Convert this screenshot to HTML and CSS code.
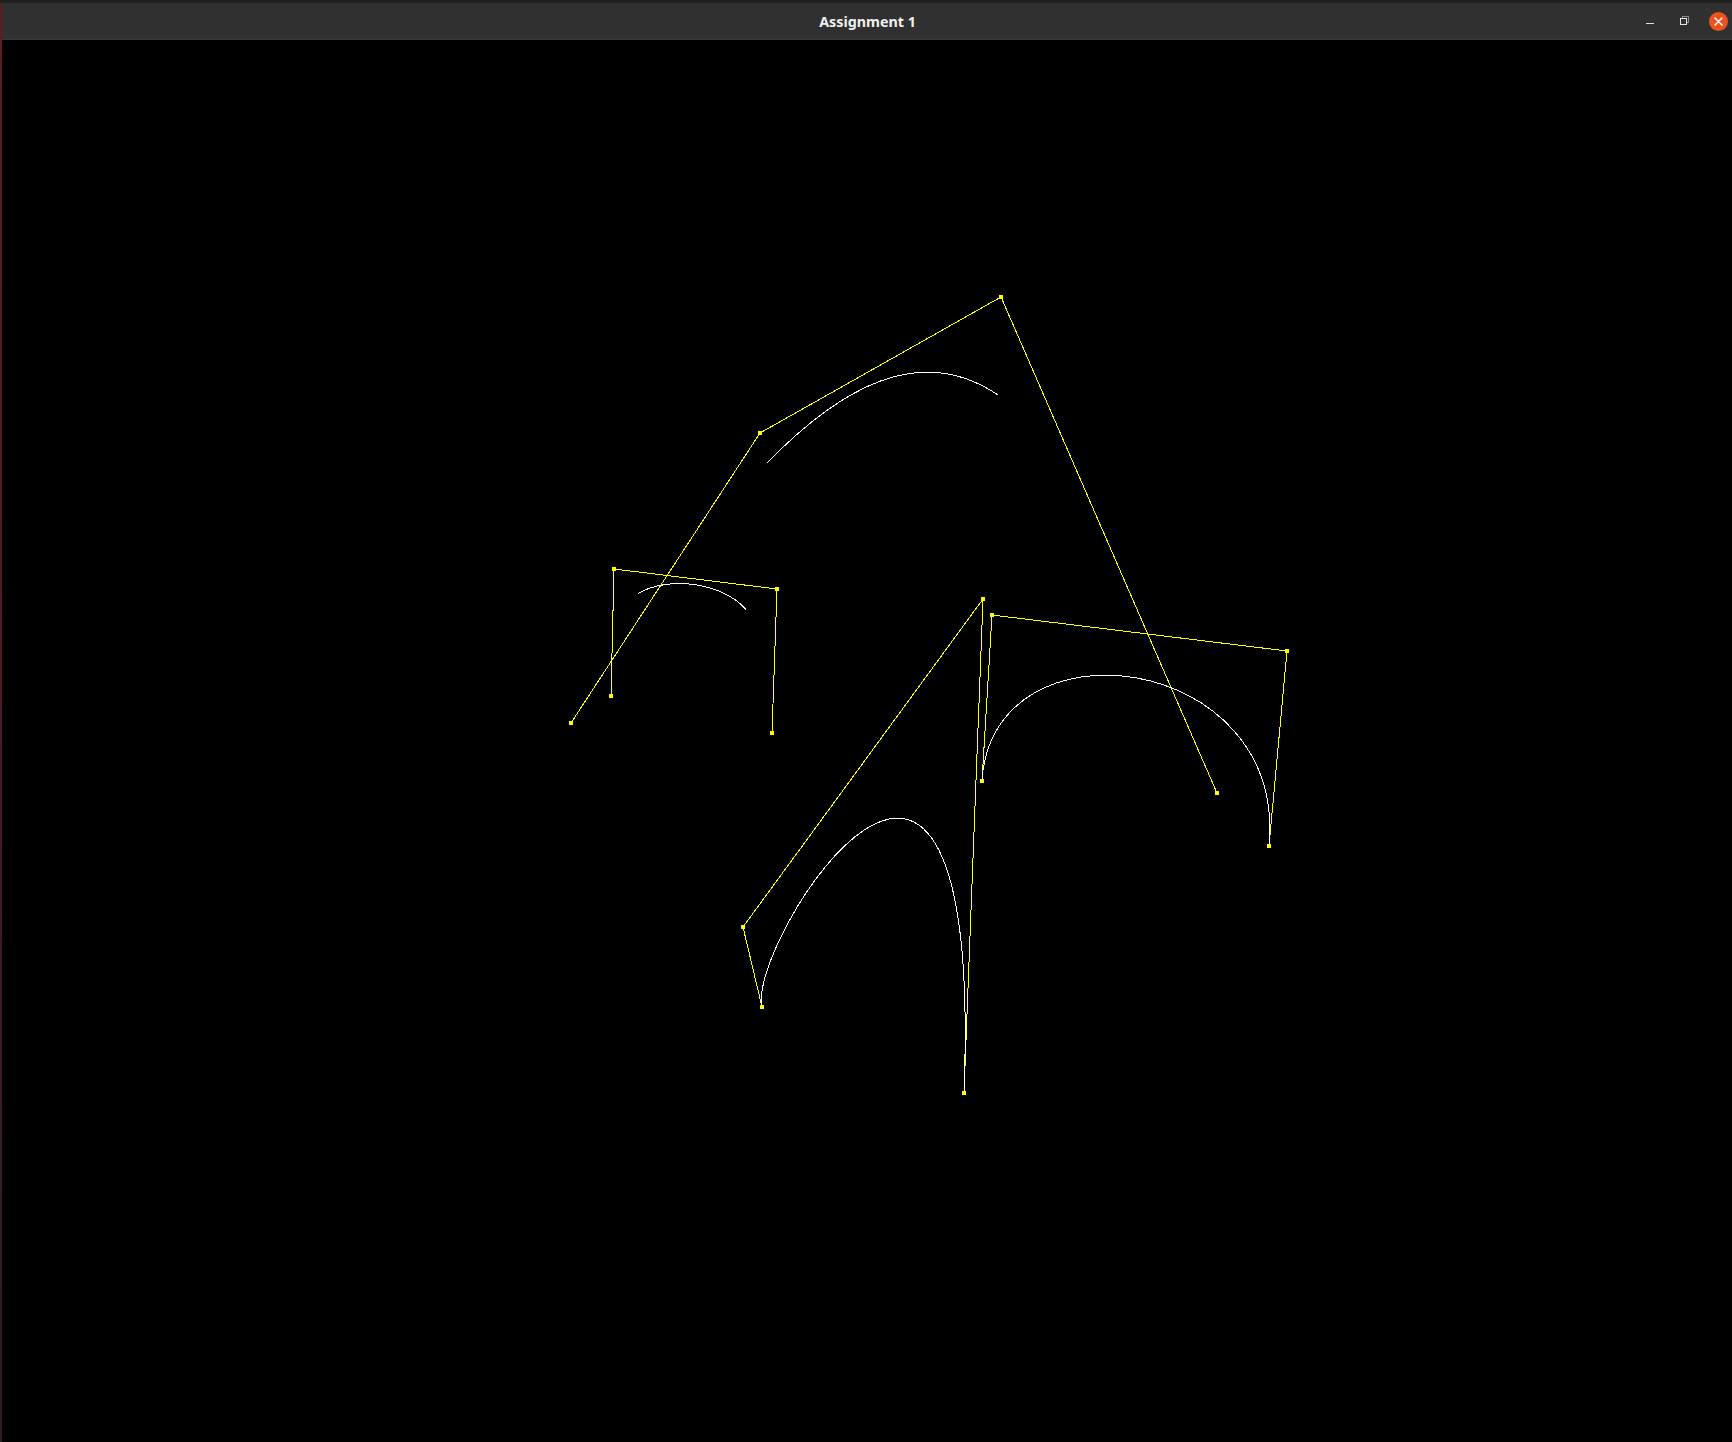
FILE: index.html
```html
<!DOCTYPE html>
<html lang="en">
<head>
<meta charset="utf-8">
<title>Assignment 1</title>
<link rel="stylesheet" href="styles.css">
</head>
<body>
<div class="screen">
  <div class="top-edge"></div>
  <div class="frame">
    <div class="side-edge"></div>
    <div class="window">
      <header class="titlebar">
        <div class="tb-left"></div>
        <div class="tb-title">Assignment 1</div>
        <div class="tb-controls">
          <button class="tb-btn" aria-label="Minimize">
            <svg width="24" height="24" viewBox="0 0 24 24"><rect x="8" y="14" width="8" height="1" fill="#dcdcdc"/></svg>
          </button>
          <button class="tb-btn" aria-label="Restore">
            <svg width="24" height="24" viewBox="0 0 24 24" shape-rendering="crispEdges">
              <path d="M10.5 9.5 V7.5 H16.5 V13.5 H14.5" fill="none" stroke="#8a8a8a" stroke-width="1"/>
              <rect x="8.5" y="9.5" width="6" height="6" fill="none" stroke="#e8e8e8" stroke-width="1"/>
            </svg>
          </button>
          <button class="tb-btn close" aria-label="Close">
            <svg width="19" height="19" viewBox="0 0 19 19">
              <path d="M6 6 L13 13 M13 6 L6 13" stroke="#ffffff" stroke-width="1.4" stroke-linecap="round"/>
            </svg>
          </button>
        </div>
      </header>
      <main class="canvas">
        <svg class="scene" width="1730" height="1402" viewBox="2 40 1730 1402" shape-rendering="crispEdges">
          <g class="polys" fill="none" stroke="#ffff00" stroke-width="1">
            <polyline points="571,723 760,433 1001,297 1217,793"/>
            <polyline points="611,696 614,569 777,589 772,733"/>
            <polyline points="762,1007 743,927 983,599 964,1093"/>
            <polyline points="982,781 992,615 1287,651 1269,846"/>
          </g>
          <g class="curves" fill="none" stroke="#ffffff" stroke-width="1">
            <path d="M767 463 C840 388 920 342 998 395"/>
            <path d="M638 593.5 C668 575.7 722.7 582.3 746 609.6"/>
            <path d="M762 1006.7 C746.6 942.7 984 570 964 1092.7"/>
            <path d="M982 780.7 C992 614.7 1287 650.7 1269 845.7"/>
          </g>
          <g class="pts" fill="#ffff00">
            <rect x="569" y="721" width="4" height="4"/>
            <rect x="758" y="431" width="4" height="4"/>
            <rect x="999" y="295" width="4" height="4"/>
            <rect x="1215" y="791" width="4" height="4"/>
            <rect x="609" y="694" width="4" height="4"/>
            <rect x="612" y="567" width="4" height="4"/>
            <rect x="775" y="587" width="4" height="4"/>
            <rect x="770" y="731" width="4" height="4"/>
            <rect x="760" y="1005" width="4" height="4"/>
            <rect x="741" y="925" width="4" height="4"/>
            <rect x="981" y="597" width="4" height="4"/>
            <rect x="962" y="1091" width="4" height="4"/>
            <rect x="980" y="779" width="4" height="4"/>
            <rect x="990" y="613" width="4" height="4"/>
            <rect x="1285" y="649" width="4" height="4"/>
            <rect x="1267" y="844" width="4" height="4"/>
          </g>
        </svg>
      </main>
    </div>
  </div>
</div>
</body>
</html>
```
FILE: styles.css
```css
* {
  box-sizing: border-box;
}

html,
body {
  margin: 0;
  padding: 0;
  background: #000000;
  overflow: hidden;
}

.screen {
  width: 1732px;
  height: 1442px;
  display: flex;
  flex-direction: column;
}

.top-edge {
  height: 3px;
  background: #1f1f1f;
  flex: none;
}

.frame {
  flex: 1;
  display: flex;
  min-height: 0;
}

.side-edge {
  width: 2px;
  flex: none;
  background: linear-gradient(to bottom, #5c1d1d 0%, #4a1c22 45%, #2b1c2a 100%);
}

.window {
  flex: 1;
  display: flex;
  flex-direction: column;
  min-width: 0;
}

.titlebar {
  height: 37px;
  flex: none;
  background: #303030;
  border-bottom: 1px solid #3a3a3a;
  display: grid;
  grid-template-columns: 1fr auto 1fr;
  align-items: center;
}

.tb-title {
  font-family: "Noto Sans", "DejaVu Sans", sans-serif;
  font-weight: 700;
  font-size: 14.3px;
  color: #efefed;
  padding-top: 1px;
  padding-left: 1px;
  white-space: nowrap;
}

.tb-controls {
  display: flex;
  justify-content: flex-end;
  align-items: center;
  gap: 10px;
  padding-right: 2px;
}

.tb-btn {
  width: 24px;
  height: 24px;
  padding: 0;
  margin: 0;
  border: none;
  background: transparent;
  display: flex;
  align-items: center;
  justify-content: center;
}

.tb-btn svg {
  display: block;
}

.tb-btn.close svg {
  width: 19px;
  height: 19px;
  border-radius: 50%;
  background: #e95420;
}

.canvas {
  flex: 1;
  background: #000000;
  min-height: 0;
  overflow: hidden;
}

.scene {
  display: block;
}
```
